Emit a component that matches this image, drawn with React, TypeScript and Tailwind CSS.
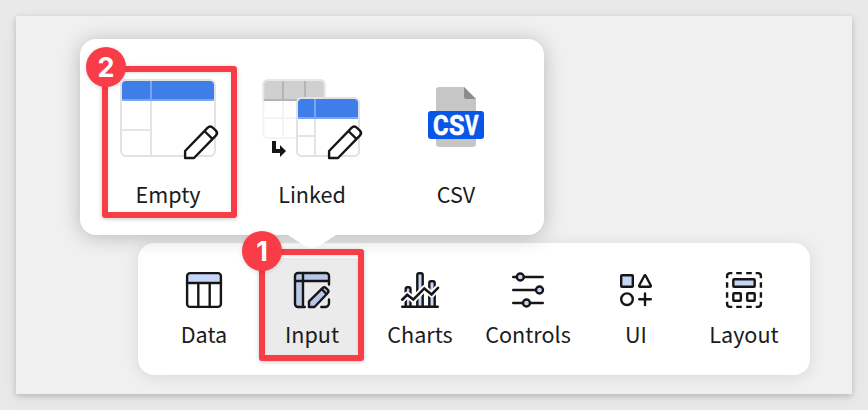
import type { ReactNode } from 'react';

const INK = '#161616';
const TINT = '#c5d6f8';

function Glyph({ children }: { children: ReactNode }) {
  return (
    <svg width="36" height="36" viewBox="0 0 36 36" fill="none" stroke={INK} strokeWidth="2.4" strokeLinecap="round" strokeLinejoin="round" className="block overflow-visible">
      {children}
    </svg>
  );
}

function DataIcon() {
  return (
    <Glyph>
      <path d="M1 11V4a3 3 0 0 1 3-3h28a3 3 0 0 1 3 3v7z" fill={TINT} stroke="none" />
      <rect x="1.1" y="1.1" width="33.8" height="33.8" rx="3" />
      <path d="M1 11H35M12.3 11V35M23.7 11V35" />
    </Glyph>
  );
}

function InputIcon() {
  return (
    <Glyph>
      <path d="M1 4a3 3 0 0 1 3-3H32a3 3 0 0 1 3 3V9H9V35H4a3 3 0 0 1-3-3z" fill="#b8c8eb" stroke="none" />
      <path d="M35 12.5V4a3 3 0 0 0-3-3H4a3 3 0 0 0-3 3V32a3 3 0 0 0 3 3H10.8M1 9H35M9 1V35" />
      <path d="M35 27.5V31a4 4 0 0 1-4 4H27.3" />
      <path d="M15 35V29.3L28.8 15.8Q30.5 14.5 32 16L33.8 17.8Q35.2 19.4 33.7 21L20.5 35Z" fill="#b8c8eb" />
      <path d="M27.6 17L32.5 22" />
    </Glyph>
  );
}

function ChartsIcon() {
  return (
    <Glyph>
      <path d="M3.7 34.7V17q0-1.7 1.7-1.7h1.4q1.7 0 1.7 1.7V34.7M15.3 34.7V3q0-1.7 1.7-1.7h2q1.7 0 1.7 1.7V34.7M27.3 34.7V11q0-1.7 1.7-1.7h2q1.7 0 1.7 1.7V34.7" fill={TINT} />
      <path d="M.2 34.7H35.8" />
      <path d="M.2 27.7L5.2 22.8L11.3 27.6L22.3 16.4L29.6 22.4L36 15.8" stroke="#fff" strokeWidth="6.4" strokeLinecap="butt" />
      <path d="M.2 27.7L5.2 22.8L11.3 27.6L22.3 16.4L29.6 22.4L36 15.8" strokeWidth="2.6" strokeLinejoin="miter" />
    </Glyph>
  );
}

function ControlsIcon() {
  return (
    <Glyph>
      <path d="M3.2 5H32.8M3.2 18H32.8M3.2 31H32.8" />
      <g fill={TINT}>
        <circle cx="10.3" cy="5" r="3.5" />
        <circle cx="29.5" cy="18" r="3.5" />
        <circle cx="16.5" cy="31" r="3.5" />
      </g>
    </Glyph>
  );
}

function UiIcon() {
  return (
    <Glyph>
      <rect x="3.2" y="3.2" width="11.6" height="11.6" rx=".8" fill={TINT} />
      <path d="M26.2 4Q27 2.6 27.8 4L32.7 13.3Q33.3 14.8 31.8 14.8H22.2Q20.7 14.8 21.3 13.3Z" />
      <circle cx="9" cy="27.2" r="5.8" />
      <path d="M27 21.4V33M21.2 27.2H32.8" />
    </Glyph>
  );
}

function LayoutIcon() {
  return (
    <Glyph>
      <g strokeLinecap="butt">
        <path d="M1.1 6.3V4a2.9 2.9 0 0 1 2.9-2.9H6.3M29.7 1.1H32a2.9 2.9 0 0 1 2.9 2.9V6.3M34.9 29.7V32a2.9 2.9 0 0 1-2.9 2.9H29.7M6.3 34.9H4a2.9 2.9 0 0 1-2.9-2.9V29.7" />
        <path d="M10.2 1.1H15.8M20.2 1.1H25.8M10.2 34.9H15.8M20.2 34.9H25.8M1.1 10.2V15.8M1.1 20.2V25.8M34.9 10.2V15.8M34.9 20.2V25.8" />
      </g>
      <rect x="7.3" y="7.3" width="21.4" height="7.4" rx=".8" fill={TINT} />
      <rect x="7.3" y="21.2" width="7.5" height="7.5" rx=".8" />
      <rect x="21.2" y="21.2" width="7.5" height="7.5" rx=".8" />
    </Glyph>
  );
}

function Pencil({ x, y }: { x: number; y: number }) {
  return (
    <g transform={`translate(${x} ${y})`} fill="#fff" stroke={INK} strokeWidth="2.4" strokeLinejoin="round">
      <path d="M1.1 33V26L23.5 2.9Q26 .4 28.7 2.7L31.7 5.3Q34.3 7.9 31.8 10.6L10 33Z" />
      <path d="M20.4 6L28.4 13.8" />
    </g>
  );
}

function EmptyTable() {
  return (
    <svg width="96" height="80" viewBox="0 0 96 80" fill="none" className="block overflow-visible">
      <rect x="1" y="1" width="94" height="76" rx="5" fill="#fff" />
      <path d="M2 22V5a3 3 0 0 1 3-3H91a3 3 0 0 1 3 3V22z" fill="#3f7de9" />
      <path d="M31 22V77M2 51H30" stroke="#e4e4e4" strokeWidth="2" />
      <path d="M31 2V21M2 21H94" stroke="#7ba5f2" strokeWidth="2" />
      <rect x="1" y="1" width="94" height="76" rx="5" stroke="#e2e2e2" strokeWidth="2" />
      <Pencil x={64} y={46} />
    </svg>
  );
}

function LinkedTable() {
  return (
    <svg width="96" height="80" viewBox="264 79 96 80" fill="none" className="block overflow-visible">
      <rect x="263.3" y="80" width="61.4" height="58" rx="4.5" fill="#fff" stroke="#f4f4f4" strokeWidth="2" />
      <path d="M264 100V84a3 3 0 0 1 3-3H321a3 3 0 0 1 3 3V100z" fill="#d0d0d0" />
      <path d="M263.3 101V84.5a4.5 4.5 0 0 1 4.5-4.5H320.2a4.5 4.5 0 0 1 4.5 4.5V101" stroke="#e7e7e7" strokeWidth="2" />
      <path d="M283 101V138M264 118H324M305 101V138" stroke="#f4f4f4" strokeWidth="2" />
      <path d="M283 81V100M305 81V100M264 100H324" stroke="#b4b4b4" strokeWidth="2" />
      <rect x="297" y="98" width="62" height="58" rx="4.5" fill="#fff" />
      <path d="M298 118V102a3 3 0 0 1 3-3H355a3 3 0 0 1 3 3V118z" fill="#3f7de9" />
      <path d="M315 119V156M298 136H314" stroke="#e4e4e4" strokeWidth="2" />
      <path d="M315 99V118M298 118H358" stroke="#7ba5f2" strokeWidth="2" />
      <rect x="297" y="98" width="62" height="58" rx="4.5" stroke="#e2e2e2" strokeWidth="2" />
      <path d="M272 141H276V149H280V145L286 151L280 157V153H272Z" fill={INK} />
      <Pencil x={328} y={125} />
    </svg>
  );
}

function CsvFile() {
  return (
    <svg width="56" height="80" viewBox="0 0 56 80" className="block">
      <path d="M11 8H36L48 20V65a3 3 0 0 1-3 3H11a3 3 0 0 1-3-3V11a3 3 0 0 1 3-3z" fill="#c6c6c6" />
      <path d="M36 8L48 20H38a2 2 0 0 1-2-2z" fill="#8c8c8c" />
      <rect y="32" width="56" height="28" rx="3" fill="#0657e8" />
      <g fill="#fff" stroke="#fff" strokeWidth=".6" strokeLinejoin="round" className="font-['Roboto',sans-serif] text-[27px] font-bold">
        <text x="5" y="55.6" textLength="15.5" lengthAdjust="spacingAndGlyphs">C</text>
        <text x="21" y="55.6" textLength="15.5" lengthAdjust="spacingAndGlyphs">S</text>
        <text x="37" y="55.6" textLength="13.5" lengthAdjust="spacingAndGlyphs">V</text>
      </g>
    </svg>
  );
}

const sources = [
  { label: 'Empty', art: <EmptyTable /> },
  { label: 'Linked', art: <LinkedTable /> },
  { label: 'CSV', art: <CsvFile /> },
];

const tools = [
  { label: 'Data', icon: <DataIcon /> },
  { label: 'Input', icon: <InputIcon /> },
  { label: 'Charts', icon: <ChartsIcon /> },
  { label: 'Controls', icon: <ControlsIcon /> },
  { label: 'UI', icon: <UiIcon /> },
  { label: 'Layout', icon: <LayoutIcon /> },
];

function Step({ n, className, badge }: { n: number; className: string; badge: string }) {
  return (
    <div className={`absolute rounded-[3px] border-6 border-[#f83d49] shadow-[0_1px_4px_rgba(0,0,0,0.22),inset_0_1px_3px_rgba(0,0,0,0.12)] ${className}`}>
      <span className={`absolute flex size-10 items-center justify-center rounded-full bg-[#f83d49] font-['Inter',sans-serif] text-[27px] leading-none font-bold text-white shadow-[0_1px_4px_rgba(0,0,0,0.15)] ${badge}`}>
        {n}
      </span>
    </div>
  );
}

export default function App() {
  return (
    <div className="h-[410px] w-[868px] overflow-hidden bg-[#e9e9e9] p-4 font-['Noto_Sans_CJK_SC',sans-serif] text-[21.6px] leading-8 text-[#1b1b1b]">
      <main className="relative h-[378px] bg-[#f0f0f0] pt-[23px] shadow-[0_2px_6px_rgba(0,0,0,0.2),0_6px_20px_rgba(0,0,0,0.04)]">
        <section className="relative z-10 ml-16 flex h-[196px] w-[464px] rounded-2xl bg-white px-4 pt-10 shadow-[0_2px_20px_rgba(0,0,0,0.23)]">
          {sources.map((s) => (
            <div key={s.label} className="flex w-36 flex-col items-center">
              {s.art}
              <span className="mt-[19px]">{s.label}</span>
            </div>
          ))}
          <svg width="48" height="16" viewBox="0 0 48 16" className="absolute top-[195px] left-[208px]">
            <path d="M0 1L20 14Q24 16 28 14L48 1V0H0z" fill="#fff" />
          </svg>
        </section>
        <nav className="mt-2 ml-[122px] flex h-[132px] w-[672px] rounded-2xl bg-white px-3 pt-[15px] shadow-[0_2px_16px_rgba(0,0,0,0.1)]">
          {tools.map((t) => (
            <div key={t.label} className="flex w-[108px] justify-center">
              <div className={`flex h-[98px] w-[94px] flex-col items-center rounded pt-3.5 ${t.label === 'Input' ? 'bg-[#ebebeb]' : ''}`}>
                {t.icon}
                <span className="mt-2.5">{t.label}</span>
              </div>
            </div>
          ))}
        </nav>
        <Step n={2} className="top-[50px] left-[86px] z-20 h-[152px] w-[135px]" badge="-top-[25px] -left-[22px]" />
        <Step n={1} className="top-[233px] left-[243px] z-20 h-[112px] w-[105px]" badge="-top-6 -left-[23px]" />
      </main>
    </div>
  );
}
